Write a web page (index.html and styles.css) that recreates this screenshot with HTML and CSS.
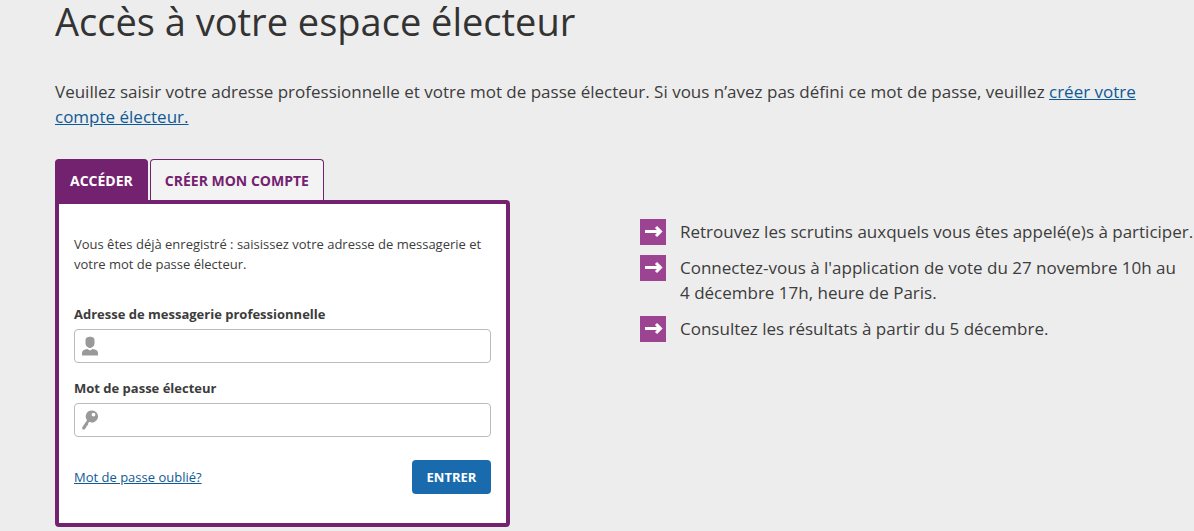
FILE: index.html
```html
<!DOCTYPE html>
<html lang="fr">
<head>
<meta charset="utf-8">
<meta name="viewport" content="width=device-width, initial-scale=1">
<title>Accès à votre espace électeur</title>
<link rel="stylesheet" href="styles.css">
</head>
<body>
<main class="page">
  <h1 class="title">Accès à votre espace électeur</h1>
  <p class="intro">Veuillez saisir votre adresse professionnelle et votre mot de passe électeur. Si vous n’avez pas défini ce mot de passe, veuillez <a href="#">créer votre compte électeur.</a></p>
  <div class="columns">
    <section class="access">
      <div class="tabs" role="tablist">
        <button class="tab tab-active" type="button" role="tab" aria-selected="true">ACCÉDER</button>
        <button class="tab" type="button" role="tab" aria-selected="false">CRÉER MON COMPTE</button>
      </div>
      <form class="panel">
        <p class="help">Vous êtes déjà enregistré : saisissez votre adresse de messagerie et votre mot de passe électeur.</p>
        <label class="label" for="email">Adresse de messagerie professionnelle</label>
        <div class="field">
          <svg class="field-icon" viewBox="0 0 18 20" aria-hidden="true"><path d="M4.500 4.500C4.500 1.500 6.500.8 9 .8s4.500.7 4.500 3.700v3C13.500 9.800 11 12 9 12S4.500 9.800 4.500 7.500z"/><path d="M1 19.500v-2.700c0-2 2-3 5.300-3.700L9 14.500l2.700-1.400c3.300.7 5.300 1.700 5.300 3.700v2.700z"/></svg>
          <input class="input" id="email" type="email">
        </div>
        <label class="label" for="password">Mot de passe électeur</label>
        <div class="field">
          <svg class="field-icon" viewBox="0 0 18 20" aria-hidden="true"><path fill-rule="evenodd" d="M11 .5a6 6 0 1 1-2.800 11.300L7 13.700l.2 1.200-1.500.8-.4 1.500L3.500 19.500H1.300v-2.300L6 10.200A6 6 0 0 1 11 .5zM12.500 2.700a1.900 1.900 0 1 0 0 3.800 1.900 1.900 0 0 0 0-3.800z"/></svg>
          <input class="input" id="password" type="password">
        </div>
        <div class="actions">
          <a class="forgot" href="#">Mot de passe oublié?</a>
          <button class="submit" type="submit">ENTRER</button>
        </div>
      </form>
    </section>
    <ul class="steps">
      <li class="step"><svg class="arrow" viewBox="0 0 26 26" aria-hidden="true"><path d="M5 12.500h15M16 8l4.500 4.500L16 17"/></svg><span>Retrouvez les scrutins auxquels vous êtes appelé(e)s à participer.</span></li>
      <li class="step"><svg class="arrow" viewBox="0 0 26 26" aria-hidden="true"><path d="M5 12.500h15M16 8l4.500 4.500L16 17"/></svg><span>Connectez-vous à l'application de vote du 27 novembre 10h au 4&nbsp;décembre 17h, heure de Paris.</span></li>
      <li class="step"><svg class="arrow" viewBox="0 0 26 26" aria-hidden="true"><path d="M5 12.500h15M16 8l4.500 4.500L16 17"/></svg><span>Consultez les résultats à partir du 5 décembre.</span></li>
    </ul>
  </div>
</main>
</body>
</html>
```
FILE: styles.css
```css
* { box-sizing: border-box; }
body {
  margin: 0;
  background: #ededed;
  color: #3c3c3c;
  font-family: "Segoe UI", "Open Sans", "Noto Sans", sans-serif;
  font-size: 17px;
  line-height: 25px;
}
a { color: #0f5a96; }
.page { padding: 0 0 4px 55px; }
.title {
  margin: 0;
  color: #333;
  font-size: 38px;
  font-weight: 400;
  line-height: 42px;
}
.intro { margin: 37px 56px 30px 0; }
.columns {
  display: grid;
  grid-template-columns: minmax(0, 455fr) minmax(0, 554fr);
  column-gap: 130px;
}
.tabs { display: flex; gap: 2px; }
.tab {
  height: 41px;
  padding: 0 14px;
  border: 1px solid #73226f;
  border-bottom: 0;
  border-radius: 4px 4px 0 0;
  background: #f3f3f3;
  color: #73226f;
  font: 700 14px "Segoe UI", "Open Sans", sans-serif;
}
.tab-active { background: #73226f; color: #fff; }
.panel {
  padding: 30px 15px 29px;
  border: 4px solid #73226f;
  border-radius: 0 4px 4px 4px;
  background: #fff;
  font-size: 13px;
  line-height: 20px;
}
.help { margin: 0 0 30px; }
.label {
  display: block;
  margin-bottom: 5px;
  font-weight: 700;
}
.field { display: grid; align-items: center; margin-bottom: 15px; }
.field-icon {
  grid-area: 1 / 1;
  z-index: 1;
  width: 18px;
  height: 20px;
  margin-left: 7px;
  fill: #999;
  pointer-events: none;
}
.input {
  grid-area: 1 / 1;
  width: 100%;
  height: 34px;
  padding: 0 10px 0 32px;
  border: 1px solid #bbb;
  border-radius: 4px;
  background: #fff;
  font: inherit;
}
.actions {
  display: flex;
  align-items: center;
  justify-content: space-between;
  margin-top: 23px;
}
.submit {
  min-width: 79px;
  height: 34px;
  padding: 0 14px;
  border: 0;
  border-radius: 4px;
  background: #196bae;
  color: #fff;
  font: 700 13px "Segoe UI", "Open Sans", sans-serif;
}
.steps {
  display: grid;
  align-content: start;
  gap: 11px;
  margin: 60px 0 0;
  padding: 0;
  list-style: none;
}
.step { display: flex; gap: 14px; }
.arrow {
  flex: none;
  width: 26px;
  height: 26px;
  margin-bottom: -1px;
  background: #9c4492;
  fill: none;
  stroke: #fff;
  stroke-width: 3;
}
```
